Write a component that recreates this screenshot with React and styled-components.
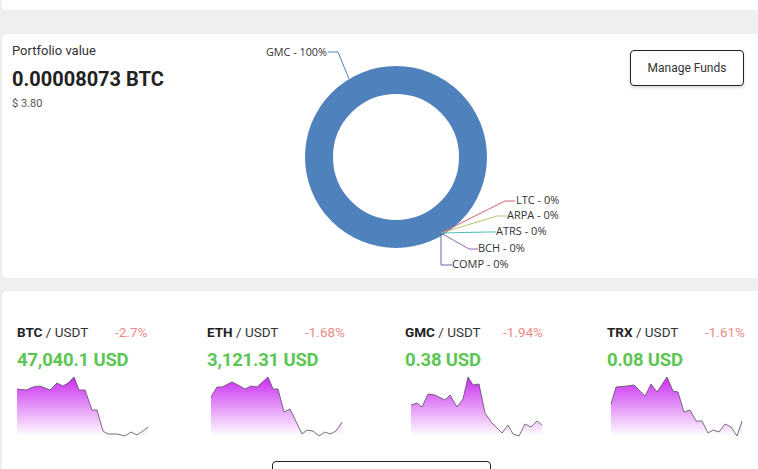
import React from 'react'
import styled, { createGlobalStyle } from 'styled-components'


// global
const GlobalStyle = createGlobalStyle`
  html, body {
    margin: 0;
    padding: 0;
    background: #efefef;
    overflow: hidden;
  }
  body {
    font-family: Roboto, "Liberation Sans", sans-serif;
    color: #222;
  }
`

// data
const slices = [
  { name: 'LTC', color: '#cf6470', line: [[255, 167], [265, 167]], text: [266, 170] },
  { name: 'ARPA', color: '#b6c86c', line: [[247, 182], [257, 182]], text: [257, 185] },
  { name: 'ATRS', color: '#4cbfb5', line: [[237, 198], [246, 198]], text: [246, 201] },
  { name: 'BCH', color: '#8a6ca8', line: [[219, 215], [228, 215]], text: [228, 218] },
  { name: 'COMP', color: '#5c6f98', line: [[191, 231], [202, 231]], text: [202, 234] },
]

const markets = [
  {
    base: 'BTC', change: '-2.7%', price: '47,040.1 USD', width: 190, shift: 0,
    points: [[0,13],[9,14],[16,11],[23,10],[33,14],[40,7],[46,10],[51,7],[57,1],[62,14],[68,14],[75,34],[80,34],[86,55],[91,58],[100,58],[108,60],[114,56],[120,59],[126,55],[131,51]],
  },
  {
    base: 'ETH', change: '-1.68%', price: '3,121.31 USD', width: 198, shift: 4,
    points: [[0,21],[6,11],[11,11],[21,6],[27,9],[34,13],[40,10],[46,11],[57,1],[62,13],[67,13],[73,36],[79,33],[91,58],[96,54],[102,55],[108,60],[114,56],[119,58],[125,55],[131,46]],
  },
  {
    base: 'GMC', change: '-1.94%', price: '0.38 USD', width: 202, shift: 6,
    points: [[0,29],[6,27],[11,31],[17,18],[24,19],[34,24],[39,19],[46,31],[52,23],[57,1],[62,9],[68,8],[74,37],[81,47],[91,57],[97,49],[102,58],[108,60],[114,48],[120,51],[126,45],[131,49]],
  },
  {
    base: 'TRX', change: '-1.61%', price: '0.08 USD', width: 200, shift: 4,
    points: [[0,28],[5,11],[16,10],[23,9],[34,20],[40,8],[46,16],[56,1],[62,15],[67,16],[73,36],[79,34],[85,45],[91,45],[97,57],[102,54],[108,56],[114,48],[120,51],[126,60],[131,45]],
  },
]


// styled components
const Page = styled.div`
  display: flex;
  flex-direction: column;
  gap: 13px;
  padding-left: 2px;
  width: 790px;
`

const TopStrip = styled.div`
  height: 10px;
  background: #fff;
  margin-bottom: 11px;
  border-radius: 0 0 4px 4px;
`

const Card = styled.div`
  background: #fff;
  border-radius: 5px;
  box-shadow: 0 0 2px rgba(0, 0, 0, 0.05);
`

const PortfolioCard = styled(Card)`
  height: 244px;
  display: grid;
  grid-template-columns: 248px 320px 1fr;
`

const Info = styled.div`
  padding: 9px 10px;
`

const Label = styled.div`
  font-size: 13px;
  line-height: 16px;
  color: #333;
`

const Amount = styled.div`
  margin-top: 8px;
  font-size: 20px;
  line-height: 24px;
  font-weight: 700;
  color: #222;
`

const Fiat = styled.div`
  margin-top: 6px;
  font-size: 11px;
  color: #555;
`

const Button = styled.button`
  font-family: Roboto, "Liberation Sans", sans-serif;
  background: #fff;
  color: #333;
  border: 1px solid #222;
  border-radius: 4px;
  box-shadow: 0 2px 3px rgba(0, 0, 0, 0.15);
  cursor: pointer;
`

const ManageButton = styled(Button)`
  justify-self: start;
  align-self: start;
  margin: 16px 0 0 60px;
  width: 114px;
  height: 36px;
  font-size: 12px;
`

const MarketCard = styled(Card)`
  padding: 33px 0 0 15px;
  height: 200px;
  display: flex;
  flex-direction: column;
`

const MarketRow = styled.div`
  display: flex;
`

const Market = styled.div`
  width: ${p => p.$width}px;
  flex: none;
`

const Pair = styled.div`
  display: flex;
  font-size: 13.5px;
  line-height: 16px;
  color: #333;
`

const PairName = styled.div`
  width: 98px;

  b {
    color: #222;
  }
`

const Change = styled.div`
  color: #f08a86;
`

const Price = styled.div`
  margin-top: 9px;
  font-size: 18.5px;
  line-height: 22px;
  font-weight: 700;
  letter-spacing: -0.2px;
  color: #5cc653;
`

const Spark = styled.svg`
  display: block;
  margin: 5px 0 0 ${p => p.$shift}px;
  overflow: visible;
`

const MoreButton = styled(Button)`
  align-self: center;
  margin: 25px 0 0 -47px;
  width: 219px;
  height: 34px;
  box-shadow: none;
`


// components
function Donut() {
  const pivot = [191, 199]
  return (
    <svg width="320" height="244" style={{ display: 'block' }}>
      <circle cx="146" cy="123" r="77" fill="none" stroke="#4f81bd" strokeWidth="28" />
      <polyline points="78,18 88,18 99,45" fill="none" stroke="#4f81bd" strokeWidth="1" />
      <text x="77" y="22" textAnchor="end" fontFamily="'Open Sans', sans-serif" fontSize="11" fill="#333" textLength="61" lengthAdjust="spacingAndGlyphs">GMC - 100%</text>
      {slices.map(s => {
        const pts = s.name === 'COMP'
          ? [pivot, s.line[0], s.line[1]]
          : [pivot, ...s.line]
        return (
          <g key={s.name}>
            <polyline points={pts.map(p => p.join(',')).join(' ')} fill="none" stroke={s.color} strokeWidth="1" />
            <text x={s.text[0]} y={s.text[1]} fontFamily="'Open Sans', sans-serif" fontSize="11" fill="#333">{s.name} - 0%</text>
          </g>
        )
      })}
    </svg>
  )
}

function Sparkline({ points, shift, id }) {
  const line = points.map(p => p.join(',')).join(' ')
  const area = `0,60 ${line} 131,60`
  return (
    <Spark width="131" height="60" $shift={shift}>
      <defs>
        <linearGradient id={id} x1="0" y1="0" x2="0" y2="1">
          <stop offset="0" stopColor="#c92cf0" />
          <stop offset="1" stopColor="#c92cf0" stopOpacity="0" />
        </linearGradient>
      </defs>
      <polygon points={area} fill={`url(#${id})`} />
      <polyline points={line} fill="none" stroke="#5a4a60" strokeWidth="0.8" />
    </Spark>
  )
}


// page component
export default function App() {
  return (
    <>
      <GlobalStyle />
      <Page>
        <TopStrip />
        <PortfolioCard>
          <Info>
            <Label>Portfolio value</Label>
            <Amount>0.00008073 BTC</Amount>
            <Fiat>$ 3.80</Fiat>
          </Info>
          <Donut />
          <ManageButton>Manage Funds</ManageButton>
        </PortfolioCard>
        <MarketCard>
          <MarketRow>
            {markets.map(m => (
              <Market key={m.base} $width={m.width}>
                <Pair>
                  <PairName><b>{m.base}</b> / USDT</PairName>
                  <Change>{m.change}</Change>
                </Pair>
                <Price>{m.price}</Price>
                <Sparkline points={m.points} shift={m.shift} id={`g-${m.base}`} />
              </Market>
            ))}
          </MarketRow>
          <MoreButton />
        </MarketCard>
      </Page>
    </>
  )
}
